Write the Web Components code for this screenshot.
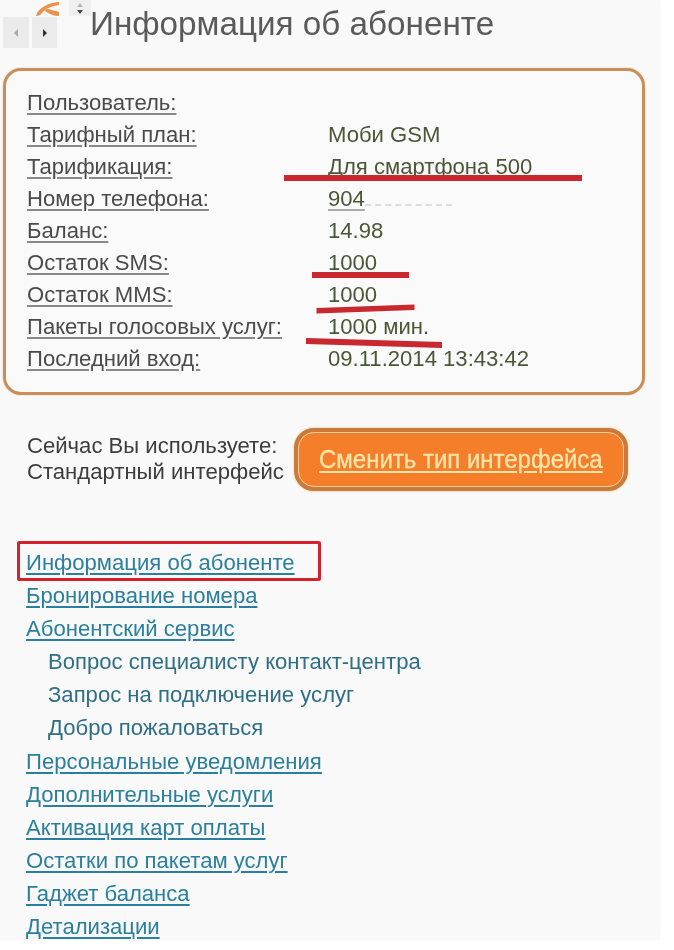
<!DOCTYPE html>
<html lang="ru"><head><meta charset="utf-8"><title>Информация об абоненте</title>
<style>
html,body{margin:0;padding:0;background:#fff}
body{font-family:"Liberation Sans",Arial,sans-serif;width:674px;height:950px;overflow:hidden}
</style></head><body>
<account-page>
  <page-header>Информация об абоненте</page-header>
  <info-panel>
    <info-row label="Пользователь:"></info-row>
    <info-row label="Тарифный план:">Моби GSM</info-row>
    <info-row label="Тарификация:">Для смартфона 500</info-row>
    <info-row label="Номер телефона:" masked>904</info-row>
    <info-row label="Баланс:">14.98</info-row>
    <info-row label="Остаток SMS:">1000</info-row>
    <info-row label="Остаток MMS:">1000</info-row>
    <info-row label="Пакеты голосовых услуг:">1000 мин.</info-row>
    <info-row label="Последний вход:">09.11.2014 13:43:42</info-row>
  </info-panel>
  <interface-switch>Сменить тип интерфейса</interface-switch>
  <nav-list>
    <nav-link marked>Информация об абоненте</nav-link>
    <nav-link>Бронирование номера</nav-link>
    <nav-link>Абонентский сервис</nav-link>
    <nav-link sub>Вопрос специалисту контакт-центра</nav-link>
    <nav-link sub>Запрос на подключение услуг</nav-link>
    <nav-link sub>Добро пожаловаться</nav-link>
    <nav-link>Персональные уведомления</nav-link>
    <nav-link>Дополнительные услуги</nav-link>
    <nav-link>Активация карт оплаты</nav-link>
    <nav-link>Остатки по пакетам услуг</nav-link>
    <nav-link>Гаджет баланса</nav-link>
    <nav-link>Детализации</nav-link>
  </nav-list>
</account-page>
<script>
function def(name, html, init){
  customElements.define(name, class extends HTMLElement{
    constructor(){super();this.attachShadow({mode:'open'}).innerHTML=html;}
    connectedCallback(){ if(init) init(this); }
  });
}
def('account-page',`<style>
:host{display:block;position:relative;width:660px;height:940px;background:#f9f9f9;overflow:hidden;box-shadow:0 0 6px #f9f9f9}
svg{position:absolute;left:0;top:0;width:674px;height:950px;pointer-events:none}
</style><slot></slot>
<svg viewBox="0 0 674 950" fill="none">
<g fill="#c8282e" style="filter:blur(.4px)">
<path d="M284 175h298v6H284z"/>
<path d="M312 272h97v6h-97z"/>
<path d="M316.500 308l98-3.500v5.500l-98 3.500z"/>
<path d="M306 338l136 4v6l-136-4z"/>
</g>
</svg>`);
def('page-header',`<style>
:host{display:flex;height:68px;box-sizing:border-box;color:#5a5a5a}
.tools{width:90px;flex:none;display:grid;grid-template-columns:26px 25px;grid-template-rows:17px 31px;column-gap:3px;padding-left:3px;box-sizing:border-box;position:relative;align-content:start}
.top{grid-column:1/3;display:flex;align-items:flex-start}
.ud{background:#efefef;height:16px;width:22px;display:flex;justify-content:center;margin-left:9px;flex:none}
.nv{background:#ebebeb;display:flex;align-items:center;justify-content:center}
.title{font-size:33.250px;line-height:48px;white-space:nowrap;filter:blur(.3px)}
</style>
<div class="tools">
 <div class="top"><svg width="24" height="17" viewBox="0 0 24 17" style="flex:none;margin-left:33px"><path d="M1 13C5 7 12 3 23 2v3C15 6 9 9 6 13c-1 2-4 3-6 3z" fill="#e8924a"/><path d="M10 9c4 0 9 2 13 3v4c-5 0-10-2-14-5z" fill="#e8924a"/></svg>
 <div class="ud"><svg width="10" height="16" viewBox="0 0 10 16"><path d="M5 3l3 4H2z" fill="#b5b5b5"/><path d="M5 14l-3-4h6z" fill="#444"/></svg></div></div>
 <div class="nv"><svg width="8" height="12" viewBox="0 0 8 12"><path d="M6 2v8L2 6z" fill="#a8a8a8"/></svg></div>
 <div class="nv"><svg width="8" height="12" viewBox="0 0 8 12"><path d="M2 2v8l4-4z" fill="#333"/></svg></div>
</div>
<div class="title"><slot></slot></div>`);
def('info-panel',`<style>
:host{display:block;box-sizing:border-box;width:642px;height:327px;margin-left:3px;border:3px solid #c98f5a;border-radius:18px;padding:16px 0 0 21px;background:#fafafa;box-shadow:0 0 2px #e8c9a8}
</style><slot></slot>`);
def('info-row',`<style>
:host{display:grid;grid-template-columns:301px 1fr;height:32px;align-items:center;font-size:22.100px;line-height:32px;filter:blur(.3px)}
.l{color:#4a4a4a;text-decoration:underline;text-decoration-color:#8a8a8a;text-underline-offset:3px;white-space:nowrap}
.v{color:#4c5636;white-space:nowrap}
.m{display:none;width:87px;height:13px;border-bottom:2px dashed #dcdcdc}
.m.on{display:inline-block}
.n{text-decoration:none}
.n.on{text-decoration:underline;text-decoration-color:#aaa;text-underline-offset:3px}
</style><span class="l"></span><span class="v"><span class="n"><slot></slot></span><span class="m"></span></span>`,
el=>{const s=el.shadowRoot;s.querySelector('.l').textContent=el.getAttribute('label');
 if(el.hasAttribute('masked')){s.querySelector('.m').classList.add('on');s.querySelector('.n').classList.add('on');}});
def('interface-switch',`<style>
:host{display:flex;align-items:center;height:63px;margin:33px 0 0 27px;gap:9px;filter:blur(.25px)}
.t{font-size:22.100px;line-height:26px;color:#3c3c3c;white-space:nowrap;width:258px;margin-top:-1px}
.b{box-sizing:border-box;width:334px;height:63px;border-radius:20px;background:#f47e2a;border:4px solid #c97a3c;box-shadow:0 0 3px #f5c98f;display:flex;align-items:center;justify-content:center;position:relative}
.b::before{content:"";position:absolute;inset:0;border:1.500px solid #f8cf9a;border-radius:16px}
a{position:relative;display:inline-block;transform:scaleX(.94);color:#fce5a8;font-size:25.500px;line-height:30px;margin:-2px -10px 0;-webkit-text-stroke:.3px #fce5a8;text-decoration:underline;text-underline-offset:3px;white-space:nowrap}
</style><div class="t">Сейчас Вы используете:<br>Стандартный интерфейс</div><div class="b"><a><slot></slot></a></div>`);
def('nav-list',`<style>
:host{display:block;margin:55px 0 0 0;padding-left:26px;position:relative}
.mark{position:absolute;left:17px;top:-5px;width:304px;height:40px;box-sizing:border-box;border:3px solid #d3222b;border-radius:2px}
</style><div class="mark"></div><slot></slot>`);
def('nav-link',`<style>
:host{display:block;height:33.100px;line-height:33px;font-size:22.100px;color:#2a7f9e;white-space:nowrap;filter:blur(.3px)}
a{text-decoration:underline;text-underline-offset:3px}
:host([sub]){padding-left:22px;color:#2f6f86}
:host([sub]) a{text-decoration:none}
</style><a><slot></slot></a>`);
</script>
</body></html>
